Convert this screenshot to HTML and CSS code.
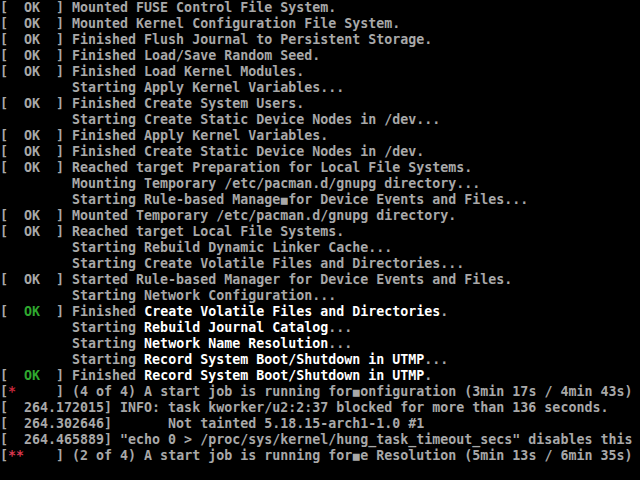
FILE: index.html
```html
<!DOCTYPE html>
<html>
<head>
<meta charset="utf-8">
<link rel="stylesheet" href="styles.css">
</head>
<body>
<div class="console">
<div class="ln">[  OK  ] Mounted FUSE Control File System.</div>
<div class="ln">[  OK  ] Mounted Kernel Configuration File System.</div>
<div class="ln">[  OK  ] Finished Flush Journal to Persistent Storage.</div>
<div class="ln">[  OK  ] Finished Load/Save Random Seed.</div>
<div class="ln">[  OK  ] Finished Load Kernel Modules.</div>
<div class="ln">         Starting Apply Kernel Variables...</div>
<div class="ln">[  OK  ] Finished Create System Users.</div>
<div class="ln">         Starting Create Static Device Nodes in /dev...</div>
<div class="ln">[  OK  ] Finished Apply Kernel Variables.</div>
<div class="ln">[  OK  ] Finished Create Static Device Nodes in /dev.</div>
<div class="ln">[  OK  ] Reached target Preparation for Local File Systems.</div>
<div class="ln">         Mounting Temporary /etc/pacman.d/gnupg directory...</div>
<div class="ln">         Starting Rule-based Manage<span class="blk">■</span>for Device Events and Files...</div>
<div class="ln">[  OK  ] Mounted Temporary /etc/pacman.d/gnupg directory.</div>
<div class="ln">[  OK  ] Reached target Local File Systems.</div>
<div class="ln">         Starting Rebuild Dynamic Linker Cache...</div>
<div class="ln">         Starting Create Volatile Files and Directories...</div>
<div class="ln">[  OK  ] Started Rule-based Manager for Device Events and Files.</div>
<div class="ln">         Starting Network Configuration...</div>
<div class="ln">[  <span class="ok">OK</span>  ] Finished <span class="hi">Create Volatile Files and Directories</span>.</div>
<div class="ln">         Starting <span class="hi">Rebuild Journal Catalog</span>...</div>
<div class="ln">         Starting <span class="hi">Network Name Resolution</span>...</div>
<div class="ln">         Starting <span class="hi">Record System Boot/Shutdown in UTMP</span>...</div>
<div class="ln">[  <span class="ok">OK</span>  ] Finished <span class="hi">Record System Boot/Shutdown in UTMP</span>.</div>
<div class="ln">[<span class="red">*</span>     ] (4 of 4) A start job is running for<span class="blk">■</span>onfiguration (3min 17s / 4min 43s)</div>
<div class="ln">[  264.172015] INFO: task kworker/u2:2:37 blocked for more than 136 seconds.</div>
<div class="ln">[  264.302646]       Not tainted 5.18.15-arch1-1.0 #1</div>
<div class="ln">[  264.465889] "echo 0 &gt; /proc/sys/kernel/hung_task_timeout_secs" disables this</div>
<div class="ln">[<span class="red2">**</span>    ] (2 of 4) A start job is running for<span class="blk">■</span>e Resolution (5min 13s / 6min 35s)</div>
</div>
</body>
</html>
```

FILE: styles.css
```css
html, body {
  margin: 0;
  padding: 0;
  background: #000000;
  width: 640px;
  height: 480px;
  overflow: hidden;
}

.console {
  font-family: "DejaVu Sans Mono", "Liberation Mono", monospace;
  font-size: 13.3px;
  font-weight: bold;
  color: #a8a8a8;
  width: 640px;
}

.ln {
  height: 16px;
  line-height: 16px;
  white-space: pre;
  overflow: hidden;
}

.ok {
  color: #2fa82f;
}

.hi {
  color: #ffffff;
}

.red {
  color: #c8283c;
}

.red2 {
  color: #d83850;
}

.blk {
  font-size: 11.5px;
  display: inline-block;
  width: 8px;
  height: 16px;
  overflow: hidden;
  text-align: center;
  vertical-align: top;
}
```
